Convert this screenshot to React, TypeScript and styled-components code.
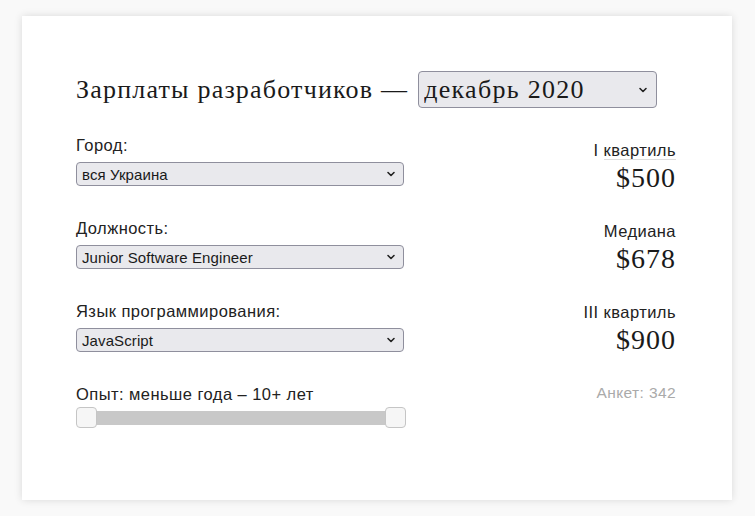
import React from "react";
import styled, { createGlobalStyle } from "styled-components";

const Global = createGlobalStyle`
  html, body { margin: 0; padding: 0; background: #f9f9f9; }
  body { font-family: "Liberation Sans", Arial, sans-serif; color: #222; }
`;

const Page = styled.div`
  padding: 16px 23px 16px 22px;
  box-sizing: border-box;
  width: 755px;
  height: 516px;
`;

const Card = styled.div`
  background: #fff;
  height: 484px;
  box-sizing: border-box;
  padding: 55px 56px 0 54px;
  box-shadow: 0 0 8px rgba(0, 0, 0, 0.13);
`;

const Heading = styled.h1`
  margin: 0 0 28px;
  display: flex;
  align-items: center;
  gap: 10px;
  font-family: "Liberation Serif", "DejaVu Serif", serif;
  font-weight: normal;
  font-size: 26px;
  letter-spacing: 1.2px;
  color: #1a1a1a;
`;

const Columns = styled.div`
  display: grid;
  grid-template-columns: 328px 1fr;
`;

const Left = styled.div`
  display: flex;
  flex-direction: column;
`;

const Right = styled.div`
  display: flex;
  flex-direction: column;
  align-items: flex-end;
  padding-top: 5px;
`;

const Field = styled.div`
  display: flex;
  flex-direction: column;
  gap: 8px;
  margin-bottom: 33px;
`;

const Label = styled.label`
  font-size: 16.5px;
  letter-spacing: 0.45px;
  color: #222;
  line-height: 18px;
`;

const SelectWrap = styled.div<{ $big?: boolean }>`
  position: relative;
  width: ${(p) => (p.$big ? "239px" : "328px")};
`;

const Select = styled.select<{ $big?: boolean }>`
  appearance: none;
  -webkit-appearance: none;
  width: 100%;
  box-sizing: border-box;
  height: ${(p) => (p.$big ? "37px" : "24px")};
  background: #e9e9ed;
  border: 1px solid #8f8f9d;
  border-radius: 4px;
  padding: ${(p) => (p.$big ? "0 30px 0 5px" : "0 24px 0 5px")};
  font-family: ${(p) =>
    p.$big ? `"Liberation Serif", "DejaVu Serif", serif` : `"Liberation Sans", Arial, sans-serif`};
  font-size: ${(p) => (p.$big ? "26px" : "15px")};
  letter-spacing: ${(p) => (p.$big ? "1.3px" : "0.1px")};
  color: #1a1a1a;
  outline: none;
`;

const Chevron = styled.svg<{ $big?: boolean }>`
  position: absolute;
  right: ${(p) => (p.$big ? "9px" : "8px")};
  top: 50%;
  transform: translateY(-50%);
  width: 10px;
  height: 10px;
  pointer-events: none;
`;

const Stat = styled.div`
  display: flex;
  flex-direction: column;
  align-items: flex-end;
  margin-bottom: 28px;
`;

const StatLabel = styled.div<{ $underline?: boolean }>`
  font-size: 16.5px;
  letter-spacing: 0.45px;
  line-height: 18px;
  color: #222;
  span {
    border-bottom: ${(p) => (p.$underline ? "1px solid #ddd" : "none")};
  }
`;

const StatValue = styled.div`
  margin-top: 3px;
  font-family: "Liberation Serif", "DejaVu Serif", serif;
  font-size: 28px;
  letter-spacing: 1px;
  line-height: 32px;
  color: #1a1a1a;
`;

const Count = styled.div`
  font-size: 15.5px;
  letter-spacing: 0.4px;
  color: #aaa;
  line-height: 18px;
`;

const SliderBox = styled.div`
  position: relative;
  width: 330px;
  height: 22px;
  margin-top: -4px;
`;

const Track = styled.div`
  position: absolute;
  left: 10px;
  right: 10px;
  top: 4px;
  height: 14px;
  background: #c8c8c8;
`;

const Handle = styled.div<{ $right?: boolean }>`
  position: absolute;
  top: 0;
  ${(p) => (p.$right ? "right: 0;" : "left: 0;")}
  width: 21px;
  height: 21px;
  box-sizing: border-box;
  border: 1px solid #c5c5c5;
  border-radius: 4px;
  background: #f6f6f6;
`;

const Chev = ({ big }: { big?: boolean }) => (
  <Chevron $big={big} viewBox="0 0 10 10">
    <path d="M2 3.5 L5 6.5 L8 3.5" fill="none" stroke="#222" strokeWidth="1.6" strokeLinecap="round" strokeLinejoin="round" />
  </Chevron>
);

const Dropdown = ({ value, big }: { value: string; big?: boolean }) => (
  <SelectWrap $big={big}>
    <Select $big={big} defaultValue={value}>
      <option>{value}</option>
    </Select>
    <Chev big={big} />
  </SelectWrap>
);

export default function App() {
  return (
    <>
      <Global />
      <Page>
        <Card>
          <Heading>
            <span>Зарплаты разработчиков —</span>
            <Dropdown big value="декабрь 2020" />
          </Heading>
          <Columns>
            <Left>
              <Field>
                <Label>Город:</Label>
                <Dropdown value="вся Украина" />
              </Field>
              <Field>
                <Label>Должность:</Label>
                <Dropdown value="Junior Software Engineer" />
              </Field>
              <Field>
                <Label>Язык программирования:</Label>
                <Dropdown value="JavaScript" />
              </Field>
              <Field>
                <Label>Опыт: меньше года – 10+ лет</Label>
                <SliderBox>
                  <Track />
                  <Handle />
                  <Handle $right />
                </SliderBox>
              </Field>
            </Left>
            <Right>
              <Stat>
                <StatLabel $underline>I <span>квартиль</span></StatLabel>
                <StatValue>$500</StatValue>
              </Stat>
              <Stat>
                <StatLabel>Медиана</StatLabel>
                <StatValue>$678</StatValue>
              </Stat>
              <Stat>
                <StatLabel>III квартиль</StatLabel>
                <StatValue>$900</StatValue>
              </Stat>
              <Count>Анкет: 342</Count>
            </Right>
          </Columns>
        </Card>
      </Page>
    </>
  );
}
